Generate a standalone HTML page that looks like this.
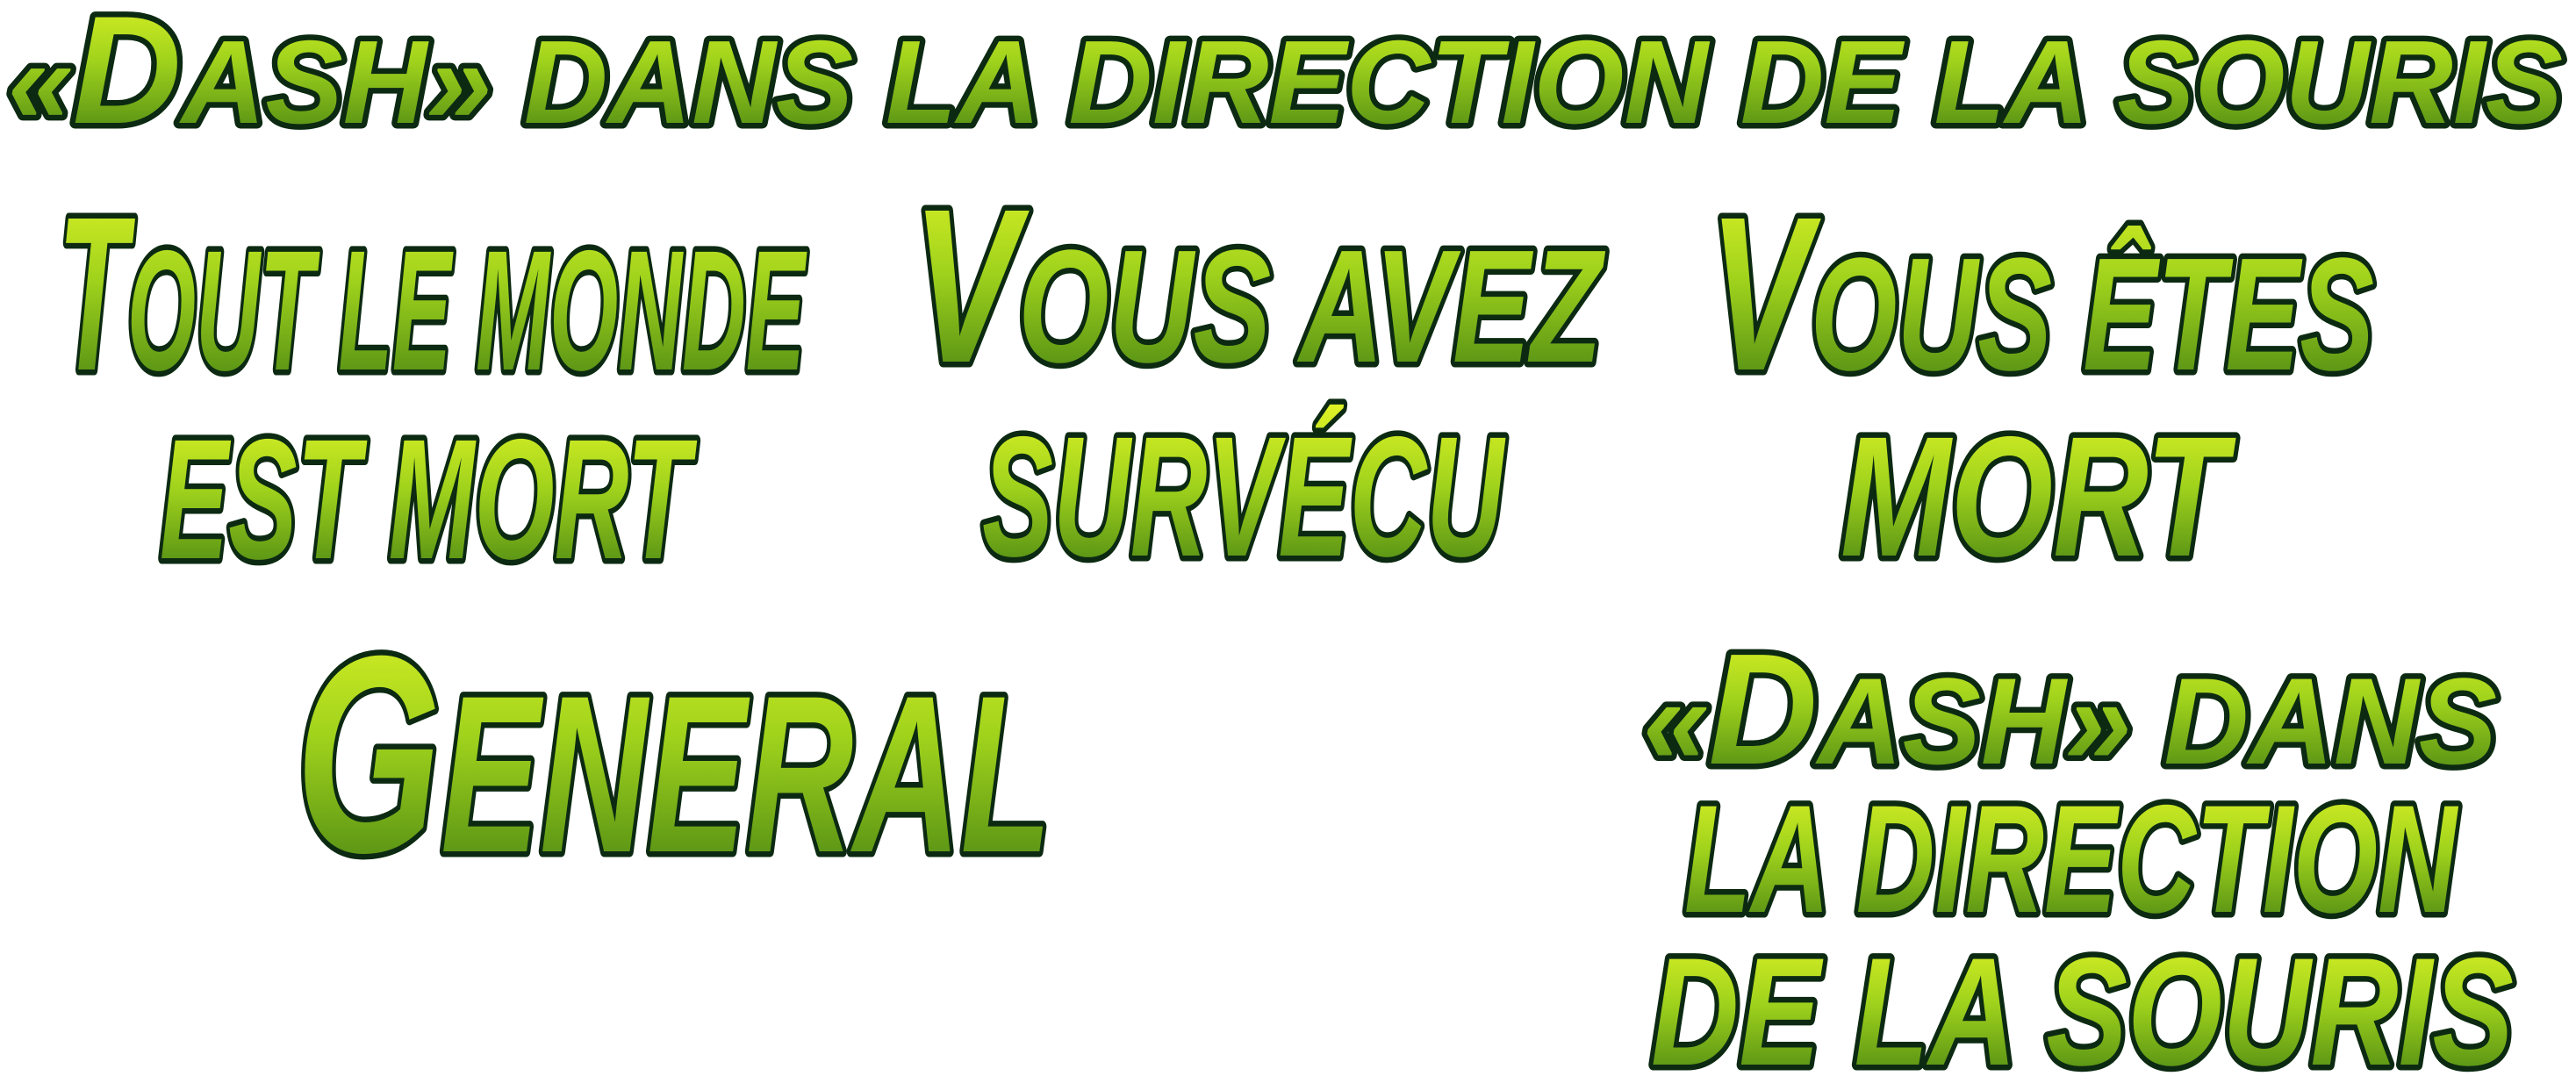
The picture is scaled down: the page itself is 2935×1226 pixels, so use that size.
<!DOCTYPE html>
<html><head><meta charset="utf-8"><style>
html,body{margin:0;padding:0;background:#fff;}
svg{display:block;}
text{font-family:"Liberation Sans",sans-serif;font-weight:bold;font-style:italic;fill:url(#g);stroke:#0c2a12;stroke-width:13;paint-order:stroke;stroke-linejoin:round;}
</style></head><body>
<svg width="2935" height="1226" viewBox="0 0 2935 1226" xmlns="http://www.w3.org/2000/svg">
<defs>
<linearGradient id="g" x1="0" y1="0" x2="0" y2="1">
<stop offset="0" stop-color="#e2f526"/>
<stop offset="0.45" stop-color="#9fd21c"/>
<stop offset="1" stop-color="#3d7a12"/>
</linearGradient>
</defs>
<text x="9" y="140" textLength="2911" lengthAdjust="spacingAndGlyphs" font-size="135">«<tspan font-size="175">D</tspan>ASH» DANS LA DIRECTION DE LA SOURIS</text>

<text x="66" y="421" textLength="851" lengthAdjust="spacingAndGlyphs" font-size="195"><tspan font-size="250">T</tspan>OUT LE MONDE</text>
<text x="182" y="636" textLength="604" lengthAdjust="spacingAndGlyphs" font-size="195">EST MORT</text>

<text x="1039" y="412" textLength="786" lengthAdjust="spacingAndGlyphs" font-size="183"><tspan font-size="250">V</tspan>OUS AVEZ</text>
<text x="1119" y="633" textLength="594" lengthAdjust="spacingAndGlyphs" font-size="195">SURVÉCU</text>

<text x="1947" y="421" textLength="758" lengthAdjust="spacingAndGlyphs" font-size="183"><tspan font-size="250">V</tspan>OUS ÊTES</text>
<text x="2097" y="633" textLength="440" lengthAdjust="spacingAndGlyphs" font-size="195">MORT</text>

<text x="337" y="970" textLength="861" lengthAdjust="spacingAndGlyphs" font-size="255"><tspan font-size="320">G</tspan>ENERAL</text>

<text x="1872" y="870" textLength="973" lengthAdjust="spacingAndGlyphs" font-size="140">«<tspan font-size="180">D</tspan>ASH» DANS</text>
<text x="1919" y="1039" textLength="880" lengthAdjust="spacingAndGlyphs" font-size="175">LA DIRECTION</text>
<text x="1881" y="1213" textLength="983" lengthAdjust="spacingAndGlyphs" font-size="175">DE LA SOURIS</text>
</svg>
</body></html>
